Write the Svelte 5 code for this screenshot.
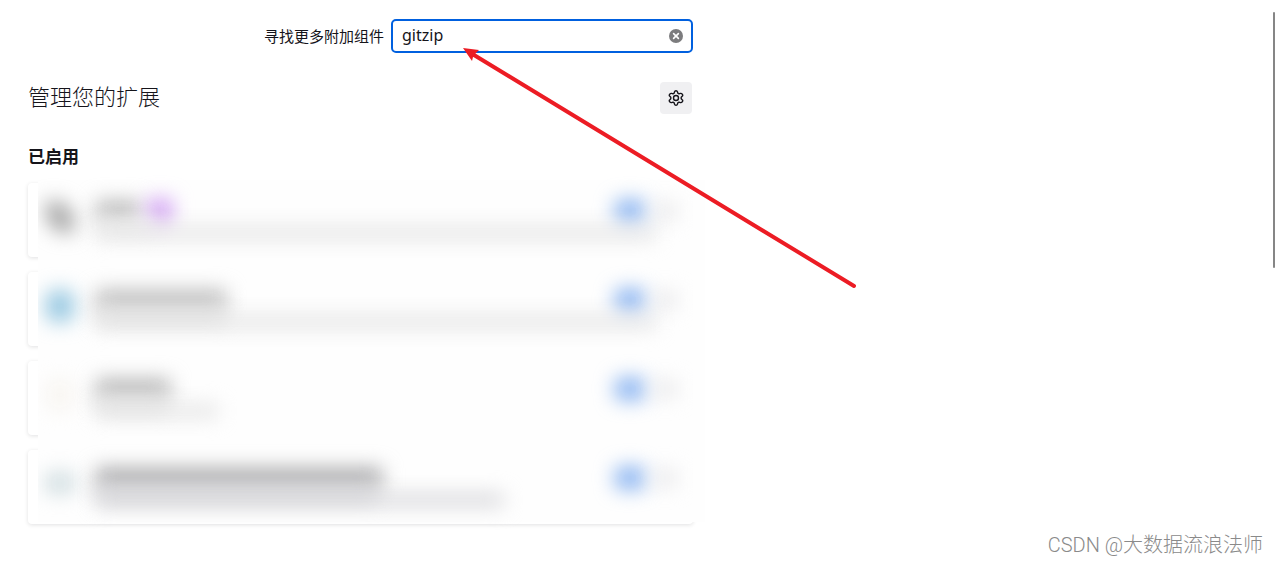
<script>
  let query = $state('gitzip');

  const addons = [
    {
      icon: '#a0a0a0', shape: 'slanted', title: 44, tone: '#b8b8b8', badge: true,
      lead: 60, leadTone: '#f0f0f0', desc: 560, descTone: '#e2e2e2'
    },
    {
      icon: '#94c6e0', shape: 'round', title: 130, tone: '#bcbcbc', badge: false,
      lead: 130, leadTone: '#dedede', desc: 560, descTone: '#e2e2e2'
    },
    {
      icon: '#f8f5f1', shape: 'round', title: 74, tone: '#b6b6b6', badge: false,
      lead: 70, leadTone: '#e4e4e4', desc: 122, descTone: '#e2e2e2'
    },
    {
      icon: '#ccdade', shape: 'flat', title: 286, tone: '#a8a8aa', badge: false,
      lead: 280, leadTone: '#d4d4d8', desc: 408, descTone: '#d4d4d8'
    }
  ];
</script>

<div class="page">
  <main>
    <form class="search" onsubmit={(e) => e.preventDefault()}>
      <label for="addon-search">寻找更多附加组件</label>
      <div class="field">
        <input id="addon-search" type="text" bind:value={query} />
        <button type="button" class="clear" aria-label="清除" onclick={() => (query = '')}>
          <svg viewBox="0 0 16 16" width="16" height="16">
            <circle cx="8" cy="8" r="7" fill="#7c7c7e" />
            <path d="M5.6 5.6l4.8 4.8M10.4 5.6l-4.8 4.8" stroke="#fff" stroke-width="1.6" stroke-linecap="round" />
          </svg>
        </button>
      </div>
    </form>

    <header>
      <h1>管理您的扩展</h1>
      <button type="button" class="gear" aria-label="设置">
        <svg viewBox="0 0 16 16" width="16" height="16" fill="none" stroke="#15141a" stroke-width="1.4" stroke-linejoin="round">
          <path d="M6.5 1.9Q6.8.8 8 .8T9.5 1.9L9.8 3.2L11 3.9L12.4 3.4Q13.6 3.2 14.4 4.4T14.2 6.2L13.2 7.2V8.8L14.2 9.8Q15.2 10.4 14.4 11.6T12.4 12.6L11 12.1L9.8 12.8L9.5 14.1Q9.2 15.2 8 15.2T6.5 14.1L6.2 12.8L5 12.1L3.6 12.6Q2.4 12.8 1.6 11.6T1.8 9.8L2.8 8.8V7.2L1.8 6.2Q.8 5.6 1.6 4.4T3.6 3.4L5 3.9L6.2 3.2Z" />
          <circle cx="8" cy="8" r="2.5" />
        </svg>
      </button>
    </header>

    <h2>已启用</h2>

    <ul>
      {#each addons as addon}
        <li>
          <div class="content">
            <span class="icon {addon.shape}" style="background:{addon.icon}"></span>
            <div class="info">
              <div class="top">
                <span class="name" style="width:{addon.title}px;background:{addon.tone}"></span>
                {#if addon.badge}<span class="badge"></span>{/if}
                <input type="checkbox" class="toggle" aria-label="启用" checked />
                <button type="button" class="more" aria-label="更多选项"></button>
              </div>
              <span class="lead" style="width:{addon.lead}px;background:{addon.leadTone}"></span>
              <span class="desc" style="width:{addon.desc}px;background:{addon.descTone}"></span>
            </div>
          </div>
        </li>
      {/each}
    </ul>
  </main>

  <svg class="arrow" width="420" height="260" viewBox="0 0 420 260" aria-hidden="true">
    <path d="M14 14L394 245" stroke="#ec1c24" stroke-width="4" stroke-linecap="round" />
    <path d="M3 7L19 9L15 13L13 16L12 20Z" fill="#ec1c24" />
  </svg>
  <div class="scrollbar"></div>
  <div class="watermark">CSDN @大数据流浪法师</div>
</div>

<style>
  :global(body) {
    margin: 0;
    background: #fff;
  }
  .page {
    position: relative;
    box-sizing: border-box;
    min-height: 100vh;
    padding: 19px 28px 38px;
    overflow: hidden;
    color: #15141a;
    font-family: "Noto Sans", "Noto Sans CJK SC", sans-serif;
    font-size: 15px;
  }
  main {
    max-width: 665px;
  }
  .search {
    display: flex;
    align-items: center;
    justify-content: flex-end;
    gap: 7px;
  }
  label {
    padding-bottom: 2px;
  }
  .field {
    display: flex;
    align-items: center;
    box-sizing: border-box;
    width: 302px;
    height: 34px;
    padding: 0 7px 0 9px;
    border: 2px solid #0060df;
    border-radius: 5px;
    background: #fff;
  }
  .field input {
    flex: 1;
    min-width: 0;
    padding: 0 0 2px;
    border: 0;
    outline: 0;
    background: none;
    color: inherit;
    font: inherit;
    font-size: 16px;
  }
  button {
    display: grid;
    place-items: center;
    padding: 0;
    border: 0;
    background: none;
  }
  header {
    display: flex;
    align-items: flex-start;
    justify-content: space-between;
    margin-top: 29px;
    padding-right: 1px;
  }
  h1 {
    margin: 0;
    font-size: 22px;
    font-weight: 300;
    line-height: 28px;
  }
  .gear {
    width: 32px;
    height: 32px;
    border-radius: 4px;
    background: #f0f0f2;
  }
  h2 {
    margin: 31px 0 14px;
    font-size: 17px;
    font-weight: 700;
    line-height: 24px;
  }
  ul {
    position: relative;
    display: flex;
    flex-direction: column;
    gap: 15px;
    margin: 0;
    padding: 0;
    list-style: none;
  }
  ul::before {
    content: "";
    position: absolute;
    inset: -3px -12px 2px 10px;
    background: #fefefe;
  }
  li {
    height: 74px;
    border-radius: 4px;
    background: #fff;
    box-shadow: 0 1px 4px rgba(12, 12, 13, 0.12);
  }
  .content {
    position: relative;
    display: flex;
    gap: 22px;
    height: 74px;
    margin-left: 10px;
    padding: 18px 16px 0 8px;
    box-sizing: border-box;
    overflow-x: clip;
  }
  .icon,
  .name,
  .badge,
  .toggle,
  .more,
  .lead,
  .desc {
    filter: blur(10px);
  }
  .icon {
    flex: none;
    width: 28px;
    height: 32px;
  }
  .slanted {
    border-radius: 4px 22px 4px 22px;
  }
  .round {
    border-radius: 10px;
  }
  .flat {
    height: 20px;
    margin-top: 5px;
  }
  .info {
    flex: 1;
    min-width: 0;
  }
  .top {
    display: flex;
    align-items: center;
    gap: 8px;
    height: 20px;
  }
  .name {
    height: 20px;
  }
  .badge {
    width: 24px;
    height: 24px;
    background: #cf9cf2;
  }
  .toggle {
    appearance: none;
    width: 30px;
    height: 22px;
    margin: 0 0 0 auto;
    border-radius: 6px;
    background: #84b0f0;
  }
  .more {
    width: 24px;
    height: 16px;
    background: #e8e8ea;
  }
  .lead,
  .desc {
    display: block;
    height: 12px;
  }
  .desc {
    max-width: 100%;
    margin-top: -6px;
  }
  .arrow {
    position: absolute;
    top: 41px;
    left: 460px;
    pointer-events: none;
  }
  .scrollbar {
    position: absolute;
    top: 12px;
    right: 3px;
    width: 2px;
    height: 256px;
    border-radius: 1px;
    background: #868686;
  }
  .watermark {
    position: absolute;
    right: 15px;
    bottom: 4px;
    color: #8a8a8a;
    font-family: Roboto, "Noto Sans CJK SC", sans-serif;
    font-size: 20px;
    font-weight: 300;
    line-height: 28px;
  }
</style>
